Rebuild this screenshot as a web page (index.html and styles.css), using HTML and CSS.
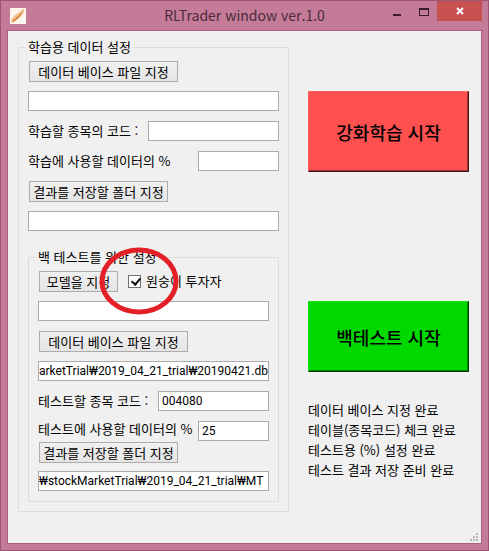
FILE: index.html
```html
<!DOCTYPE html>
<html lang="ko">
<head>
    <meta charset="UTF-8">
    <meta name="viewport" content="width=device-width, initial-scale=1.0">
    <title>RLTrader window ver.1.0</title>
    <link rel="stylesheet" href="styles.css">
</head>
<body>
    <div class="window">
        <header class="titlebar">
            <svg class="app-icon" viewBox="0 0 16 16" aria-hidden="true">
                <rect width="16" height="16" fill="#fdf6ee"/>
                <path d="M1 14C2 9 5 7 8 5L13 1L15 2C13 7 9 11 5 13Z" fill="#f0c48c"/>
                <path d="M2 15L4 10L9 6L13 3L10 8L6 12Z" fill="#d9853b"/>
                <path d="M4 11L12 3" stroke="#fbe3bd" stroke-width="1"/>
            </svg>
            <h1 class="title">RLTrader window ver.1.0</h1>
            <div class="window-buttons">
                <button type="button" class="win-btn" aria-label="최소화">
                    <svg width="8" height="14" viewBox="0 0 8 14"><rect y="10" width="8" height="2" fill="#3a1c2b"/></svg>
                </button>
                <button type="button" class="win-btn" aria-label="최대화">
                    <svg width="10" height="14" viewBox="0 0 10 14"><path d="M0 4H10V12H0Z M1 6V11H9V6Z" fill="#3a1c2b" fill-rule="evenodd"/></svg>
                </button>
                <button type="button" class="win-btn close" aria-label="닫기">
                    <svg width="8" height="8" viewBox="0 0 8 8"><path d="M1 1L7 7M7 1L1 7" stroke="#fff" stroke-width="2"/></svg>
                </button>
            </div>
        </header>

        <main class="content">
            <fieldset class="group">
                <legend>학습용 데이터 설정</legend>
                <div class="row"><button type="button" class="btn btn-wide">데이터 베이스 파일 지정</button></div>
                <div class="row"><input type="text" class="field" aria-label="데이터 베이스 파일"></div>
                <div class="row">
                    <label for="trainCode">학습할 종목의 코드 :</label>
                    <input type="text" id="trainCode" class="field field-train-code">
                </div>
                <div class="row">
                    <label for="trainPercent">학습에 사용할 데이터의 %</label>
                    <input type="text" id="trainPercent" class="field field-train-percent">
                </div>
                <div class="row"><button type="button" class="btn btn-folder">결과를 저장할 폴더 지정</button></div>
                <div class="row"><input type="text" class="field" aria-label="결과 폴더"></div>

                <fieldset class="group group-test">
                    <legend>백 테스트를 위한 설정</legend>
                    <div class="row">
                        <button type="button" class="btn btn-model">모델을 지정</button>
                        <div class="check">
                            <input type="checkbox" id="monkey" checked>
                            <label for="monkey">원숭이 투자자</label>
                            <svg class="marker" viewBox="0 0 80 68" aria-hidden="true">
                                <ellipse cx="40" cy="34" rx="37" ry="31" fill="none" stroke="#e31f27" stroke-width="5"/>
                            </svg>
                        </div>
                    </div>
                    <div class="row"><input type="text" class="field" aria-label="모델"></div>
                    <div class="row"><button type="button" class="btn btn-wide">데이터 베이스 파일 지정</button></div>
                    <div class="row"><input type="text" class="field path" aria-label="테스트 데이터 베이스 파일" value="arketTrial₩2019_04_21_trial₩20190421.db"></div>
                    <div class="row">
                        <label for="testCode">테스트할 종목 코드 :</label>
                        <input type="text" id="testCode" class="field field-test-code" value="004080">
                    </div>
                    <div class="row row-tight row-bottom">
                        <label for="testPercent">테스트에 사용할 데이터의 %</label>
                        <input type="text" id="testPercent" class="field field-test-percent" value="25">
                    </div>
                    <div class="row row-tight row-top"><button type="button" class="btn btn-folder">결과를 저장할 폴더 지정</button></div>
                    <div class="row"><input type="text" class="field path" aria-label="테스트 결과 폴더" value="₩stockMarketTrial₩2019_04_21_trial₩MT"></div>
                </fieldset>
            </fieldset>

            <section class="actions">
                <button type="button" class="start start-train">강화학습 시작</button>
                <button type="button" class="start start-test">백테스트 시작</button>
                <ul class="status">
                    <li>데이터 베이스 지정 완료</li>
                    <li>테이블(종목코드) 체크 완료</li>
                    <li>테스트용 (%) 설정 완료</li>
                    <li>테스트 결과 저장 준비 완료</li>
                </ul>
            </section>

            <svg class="grip" viewBox="0 0 9 9" aria-hidden="true">
                <path d="M6 0h2v2h-2zM3 3h2v2h-2zM6 3h2v2h-2zM0 6h2v2h-2zM3 6h2v2h-2zM6 6h2v2h-2z" fill="#b8b8b8"/>
            </svg>
        </main>
    </div>
</body>
</html>
```
FILE: styles.css
```css
* {
  margin: 0;
  padding: 0;
  box-sizing: border-box;
}

body {
  font-family: "Noto Sans CJK KR", sans-serif;
  font-size: 13px;
  line-height: 18px;
  color: #000;
}

button, input {
  font: inherit;
  color: inherit;
}

/* Window frame */
.window {
  display: flex;
  flex-direction: column;
  min-height: 100vh;
  padding: 0 7px 7px;
  border: 1px solid #9c5673;
  background-color: #c47b98;
}

.titlebar {
  display: grid;
  grid-template-columns: 1fr auto 1fr;
  align-items: center;
  height: 29px;
}

.app-icon {
  width: 16px;
  height: 16px;
  margin-left: 2px;
}

.title {
  font-size: 14px;
  font-weight: 400;
  line-height: 29px;
  color: #4b2a3b;
}

.window-buttons {
  display: flex;
  align-self: start;
  justify-content: flex-end;
  margin-right: -1px;
}

.win-btn {
  display: flex;
  align-items: center;
  justify-content: center;
  width: 27px;
  height: 20px;
  border: none;
  background: none;
}

.close {
  width: 45px;
  background-color: #c75050;
}

.content {
  position: relative;
  flex: 1;
  display: grid;
  grid-template-columns: 271fr 161fr;
  align-items: start;
  gap: 19px;
  padding: 7px 12px 20px 10px;
  border: 1px solid #a9607f;
  margin: 0 -1px -1px;
  background-color: #f0f0f0;
}

/* Group boxes */
.group {
  min-width: 0;
  padding: 0 9px 9px;
  border: 1px solid #dcdcdc;
}

.group legend {
  margin-left: -3px;
  padding: 0 3px;
}

.group-test {
  margin-top: 12px;
  padding-bottom: 5px;
}

.row {
  display: flex;
  align-items: center;
  justify-content: space-between;
  height: 30px;
}

.row label {
  white-space: nowrap;
}

.row-tight {
  height: 25px;
}

.row-bottom .field {
  align-self: flex-end;
}

.row-top {
  align-items: flex-start;
}

.field {
  width: 100%;
  height: 20px;
  padding: 0 3px;
  border: 1px solid #ababab;
  background-color: #fff;
  font-family: Roboto, "Noto Sans CJK KR", sans-serif;
  font-size: 12px;
}

.path {
  padding: 0;
}

.field-train-code {
  width: 131px;
}

.field-train-percent {
  width: 81px;
}

.field-test-code {
  width: 111px;
}

.field-test-percent {
  width: 71px;
}

.btn {
  height: 21px;
  margin-top: 1px;
  margin-left: 1px;
  border: 1px solid #acacac;
  background-image: linear-gradient(#f0f0f0, #e5e5e5);
  line-height: 18px;
  white-space: nowrap;
}

.btn-wide {
  width: 149px;
}

.btn-folder {
  width: 139px;
}

.btn-model {
  width: 79px;
}

.check {
  position: relative;
  display: flex;
  flex: 1;
  align-items: center;
  gap: 5px;
  margin-left: 10px;
}

.check input {
  appearance: none;
  width: 13px;
  height: 13px;
  border: 1px solid #707070;
  background-color: #fff;
}

.check input:checked::before {
  content: "";
  display: block;
  width: 4px;
  height: 7px;
  margin: 0 0 0 4px;
  border: solid #111;
  border-width: 0 2px 2px 0;
  transform: rotate(40deg);
}

/* Hand-drawn ring over the checkbox */
.marker {
  position: absolute;
  top: -25px;
  left: -29px;
  width: 80px;
  height: 68px;
  pointer-events: none;
}

/* Start buttons and status */
.actions {
  padding-top: 53px;
}

.start {
  display: block;
  width: 100%;
  border: 1px solid;
  font-size: 18px;
  font-weight: 500;
}

.start-train {
  height: 81px;
  margin-bottom: 129px;
  border-color: #ff6060 #401414 #401414 #ff6060;
  background-color: #ff5050;
  box-shadow: inset -1px -1px #a03232;
}

.start-test {
  height: 71px;
  margin-bottom: 28px;
  border-color: #10e010 #003c00 #003c00 #10e010;
  background-color: #00d900;
  box-shadow: inset -1px -1px #008800;
}

.status {
  list-style: none;
  line-height: 20px;
  white-space: nowrap;
}

.grip {
  position: absolute;
  right: 2px;
  bottom: 1px;
  width: 9px;
  height: 9px;
}
```
